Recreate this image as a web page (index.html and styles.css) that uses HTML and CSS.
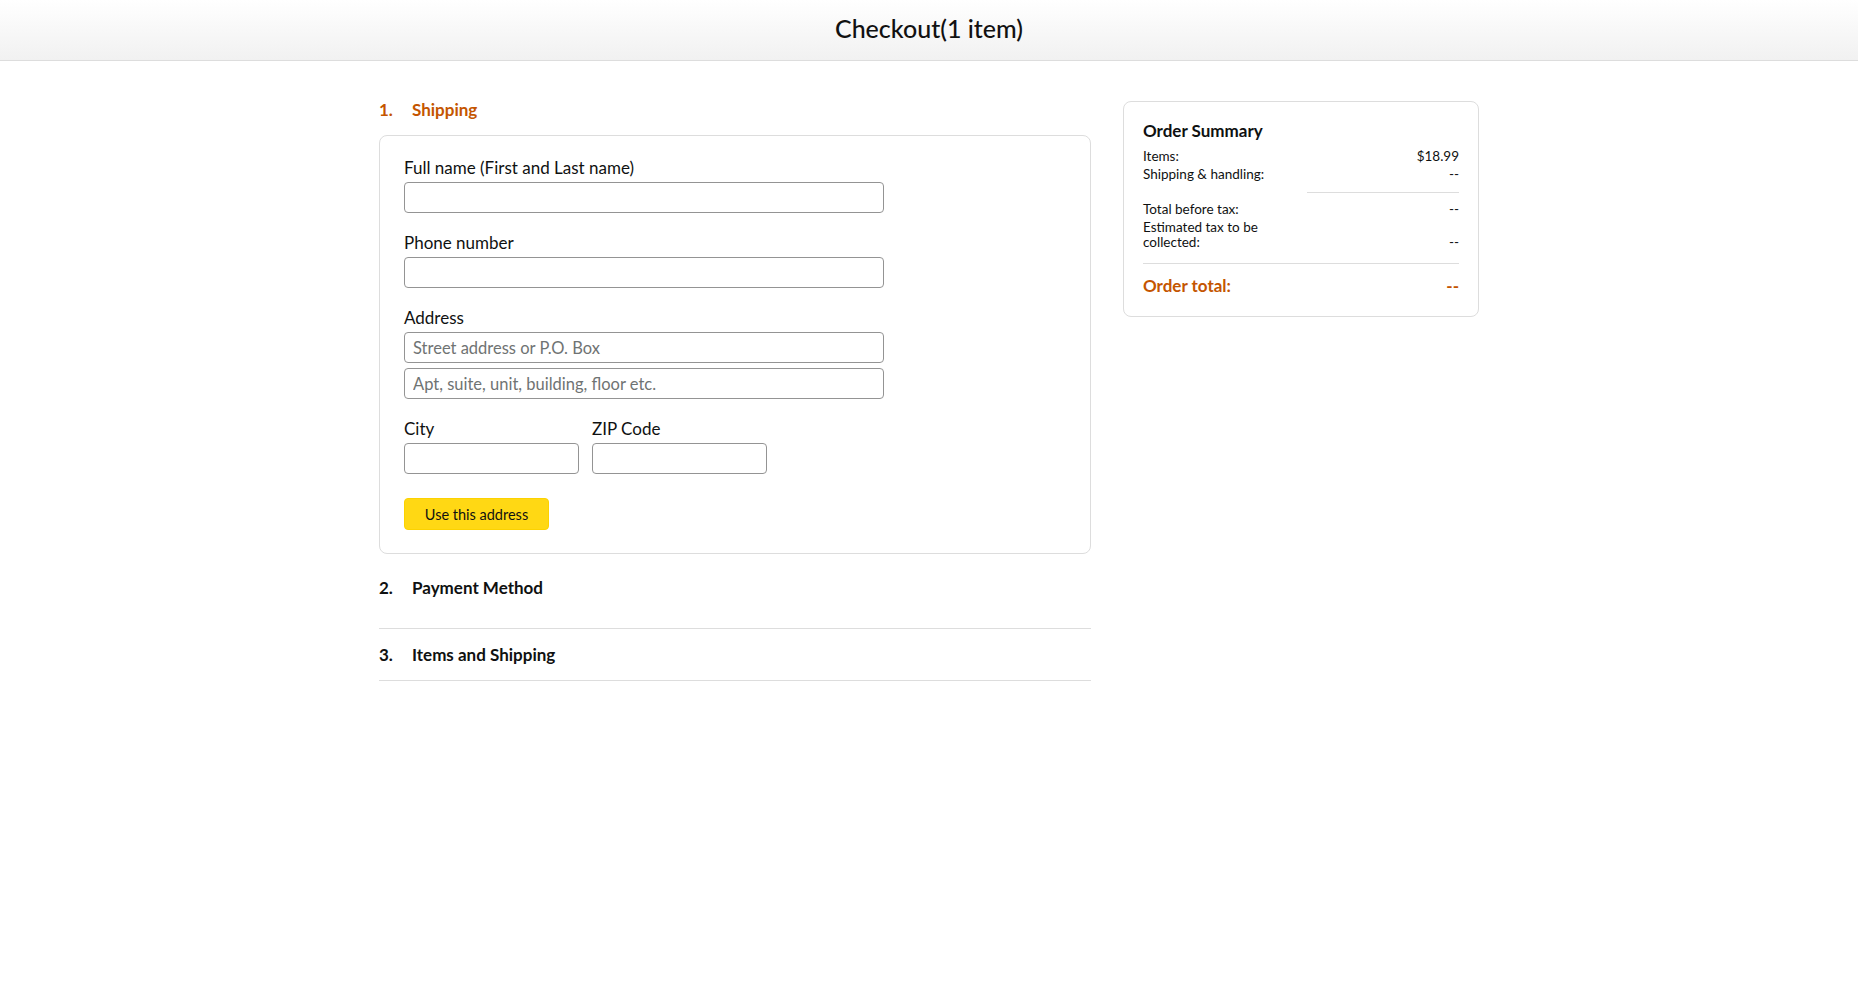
FILE: index.html
```html
<!DOCTYPE html>
<html lang="en">
<head>
<meta charset="utf-8">
<title>Checkout</title>
<link rel="stylesheet" href="styles.css">
</head>
<body>
<header class="topbar">
  <h1 class="title">Checkout(1 item)</h1>
</header>
<main class="page">
  <section class="left">
    <h2 class="step step-active"><span class="num">1.</span><span>Shipping</span></h2>
    <div class="card">
      <div class="field">
        <label class="label">Full name (First and Last name)</label>
        <input class="input wide" type="text">
      </div>
      <div class="field">
        <label class="label">Phone number</label>
        <input class="input wide" type="text">
      </div>
      <div class="field">
        <label class="label">Address</label>
        <input class="input wide" type="text" placeholder="Street address or P.O. Box">
        <input class="input wide second" type="text" placeholder="Apt, suite, unit, building, floor etc.">
      </div>
      <div class="row">
        <div class="field small">
          <label class="label">City</label>
          <input class="input" type="text">
        </div>
        <div class="field small">
          <label class="label">ZIP Code</label>
          <input class="input" type="text">
        </div>
      </div>
      <button class="btn" type="button">Use this address</button>
    </div>
    <h2 class="step step-plain step-two"><span class="num">2.</span><span>Payment Method</span></h2>
    <h2 class="step step-plain step-three"><span class="num">3.</span><span>Items and Shipping</span></h2>
  </section>
  <aside class="summary">
    <h3 class="sum-title">Order Summary</h3>
    <div class="sum-row"><span>Items:</span><span>$18.99</span></div>
    <div class="sum-row"><span>Shipping &amp; handling:</span><span>--</span></div>
    <div class="divider short"></div>
    <div class="sum-row"><span>Total before tax:</span><span>--</span></div>
    <div class="sum-row"><span>Estimated tax to be<br>collected:</span><span>--</span></div>
    <div class="divider full"></div>
    <div class="sum-total"><span>Order total:</span><span>--</span></div>
  </aside>
</main>
</body>
</html>
```
FILE: styles.css
```css
* { box-sizing: border-box; }
body {
  margin: 0;
  font-family: Lato, "Open Sans", "DejaVu Sans", sans-serif;
  color: #0f1111;
  background: #fff;
}
.topbar {
  height: 61px;
  background: linear-gradient(to bottom, #ffffff, #f1f1f1);
  border-bottom: 1px solid #dddddd;
  display: flex;
  align-items: center;
  justify-content: center;
}
.title {
  margin: 0;
  font-size: 25px;
  font-weight: 500;
  line-height: 30px;
  color: #111;
  margin-top: -4px;
}
.page {
  width: 1100px;
  margin: 0 auto;
  display: flex;
  gap: 32px;
  align-items: flex-start;
  padding-top: 39px;
}
.left { width: 712px; }
.step {
  margin: 0;
  display: flex;
  font-size: 17px;
  line-height: 20px;
  font-weight: 700;
}
.step .num { width: 33px; }
.step-active {
  color: #c45500;
  margin-bottom: 15px;
}
.step-plain {
  color: #0f1111;
  border-bottom: 1px solid #dddddd;
}
.step-two { padding: 24px 0 30px 0; }
.step-three { padding: 16px 0 15px 0; }
.card {
  border: 1px solid #dddddd;
  border-radius: 8px;
  padding: 22px 24px 23px 24px;
}
.field { display: flex; flex-direction: column; margin-bottom: 20px; }
.label {
  font-size: 17px;
  line-height: 20px;
  margin-bottom: 4px;
}
.input {
  height: 31px;
  border: 1px solid #949494;
  border-radius: 4px;
  padding: 0 8px;
  font-family: inherit;
  font-size: 16.5px;
  color: #0f1111;
  background: #fff;
}
.input::placeholder { color: #6f7373; }
.wide { width: 480px; }
.second { margin-top: 5px; }
.row { display: flex; gap: 13px; }
.small { width: 175px; }
.small .input { width: 175px; }
.row .field { margin-bottom: 24px; }
.btn {
  display: block;
  width: 145px;
  height: 32px;
  background: #ffd814;
  border: 1px solid #fcd200;
  border-radius: 4px;
  font-family: inherit;
  font-size: 14.5px;
  color: #0f1111;
  padding: 0;
}
.summary {
  width: 356px;
  margin-top: 1px;
  border: 1px solid #dddddd;
  border-radius: 8px;
  padding: 18px 19px 20px 19px;
  font-size: 13.5px;
}
.sum-title {
  margin: 0 0 7px 0;
  font-size: 17px;
  line-height: 22px;
  font-weight: 700;
}
.sum-row {
  display: flex;
  justify-content: space-between;
  align-items: flex-end;
  line-height: 15px;
  margin-bottom: 3px;
}
.divider { height: 1px; background: #dddddd; }
.divider.short { margin: 10px 0 9px 164px; }
.divider.full { margin: 13px 0 12px 0; }
.sum-total {
  display: flex;
  justify-content: space-between;
  color: #c45500;
  font-weight: 700;
  font-size: 17px;
  line-height: 20px;
}
```
